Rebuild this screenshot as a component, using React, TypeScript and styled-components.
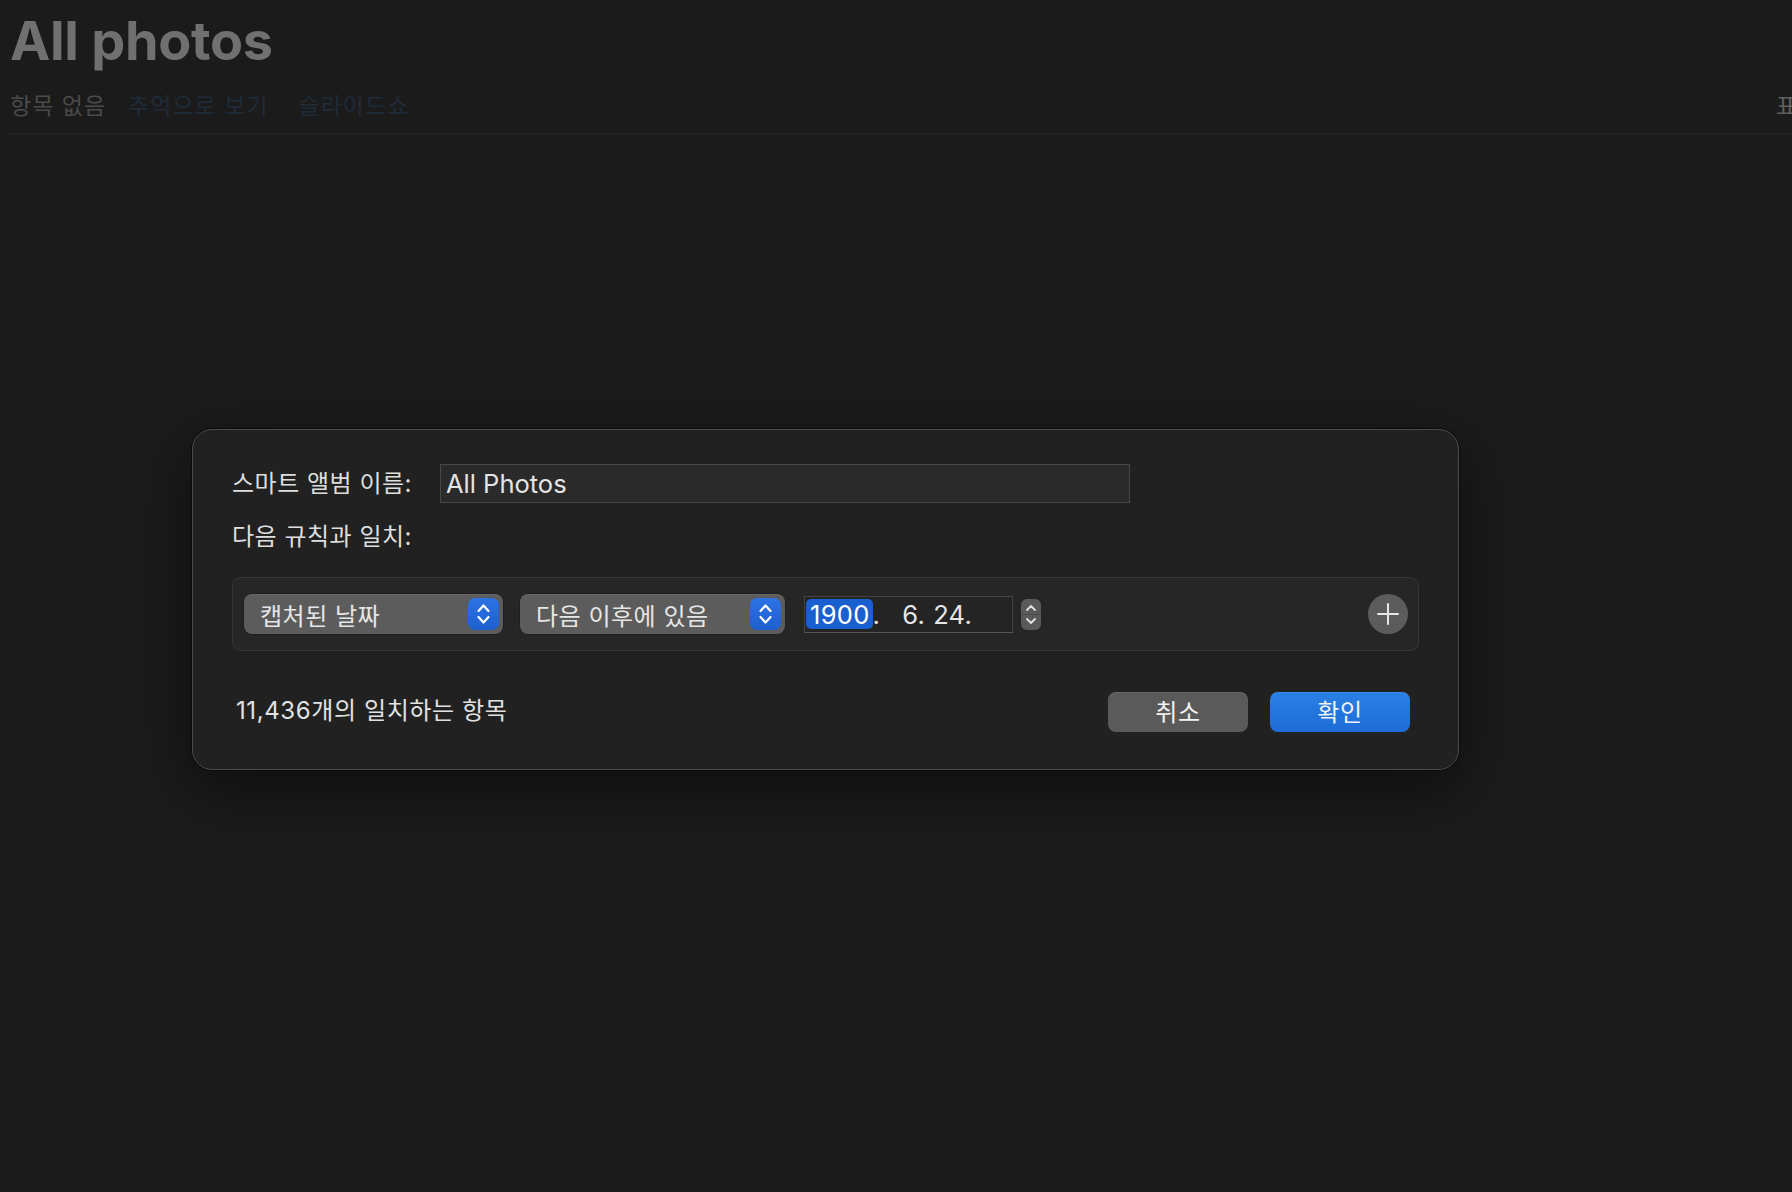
import React from "react";
import styled, { createGlobalStyle } from "styled-components";

const GlobalStyle = createGlobalStyle`
  html, body {
    margin: 0;
    padding: 0;
    background: #1b1b1b;
  }
  body {
    font-family: Inter, "Noto Sans CJK KR", "Noto Sans", sans-serif;
    -webkit-font-smoothing: antialiased;
  }
  * { box-sizing: border-box; }
`;

const Page = styled.div`
  width: 1792px;
  min-height: 1192px;
  overflow: hidden;
  background: #1b1b1b;
`;

const Header = styled.header`
  margin-left: 8px;
  padding-top: 14px;
  border-bottom: 1px solid #262626;
`;

const Title = styled.h1`
  margin: 0;
  padding-left: 2px;
  font-size: 54px;
  line-height: 54px;
  font-weight: 700;
  letter-spacing: -0.3px;
  color: #707070;
`;

const TabRow = styled.div`
  display: flex;
  align-items: center;
  margin-top: 23px;
  padding: 0 0 11px 2px;
  height: 42px;
  font-size: 23px;
  line-height: 31px;
  letter-spacing: 1px;
  white-space: nowrap;
`;

const Tab = styled.span<{ $tone: "muted" | "link"; $gap: number }>`
  margin-right: ${(p) => p.$gap}px;
  color: ${(p) => (p.$tone === "muted" ? "#4a4a4a" : "#1f2b38")};
`;

const ViewMenu = styled.span`
  margin-left: auto;
  width: 16px;
  overflow: hidden;
  color: #606060;
`;

const Sheet = styled.section`
  margin: 295px 0 0 192px;
  width: 1267px;
  padding: 34px 39px 37px 39px;
  background: #212121;
  border: 1px solid #4c4c4c;
  border-radius: 20px;
  box-shadow: 0 0 0 1px #0b0b0b, 0 18px 60px rgba(0, 0, 0, 0.5);
  color: #dedede;
  font-size: 24px;
  letter-spacing: 0.5px;
`;

const NameRow = styled.div`
  display: grid;
  grid-template-columns: 208px 690px;
  align-items: center;
  height: 39px;
`;

const Label = styled.span`
  line-height: 28px;
  white-space: nowrap;
  color: #dedede;
`;

const NameField = styled.div`
  height: 39px;
  display: flex;
  align-items: center;
  padding-left: 5px;
  background: #2a2a2a;
  border: 1px solid #474747;
  font-size: 25.5px;
  letter-spacing: 0;
  color: #e4e4e4;
`;

const RuleCaption = styled(Label)`
  display: block;
  margin-top: 20px;
`;

const RulesBox = styled.div`
  margin-top: 26px;
  height: 74px;
  display: flex;
  align-items: center;
  padding: 0 10px 0 11px;
  background: #262626;
  border: 1px solid #363636;
  border-radius: 9px;
`;

const Popup = styled.div<{ $w: number; $gap: number }>`
  width: ${(p) => p.$w}px;
  margin-right: ${(p) => p.$gap}px;
  height: 40px;
  display: flex;
  align-items: center;
  justify-content: space-between;
  padding: 0 4px 0 16px;
  background: #5c5c5c;
  border-radius: 8px;
  box-shadow: inset 0 1px 0 rgba(255, 255, 255, 0.08), 0 0 0 0.5px rgba(0, 0, 0, 0.4);
  color: #e6e6e6;
  white-space: nowrap;
`;

const BlueStepper = styled.span`
  width: 31px;
  height: 32px;
  border-radius: 7px;
  background: linear-gradient(#2d72e4, #1d5fcf);
  display: flex;
  align-items: center;
  justify-content: center;
`;

const DateField = styled.div`
  width: 209px;
  height: 37px;
  display: flex;
  align-items: center;
  padding-left: 1px;
  border: 1px solid #444;
  border-bottom-color: #555;
  background: #242424;
  font-size: 25.5px;
  letter-spacing: 0.3px;
  color: #e6e6e6;
  white-space: pre;
`;

const Segment = styled.span<{ $selected?: boolean; $gap?: number }>`
  display: inline-flex;
  align-items: center;
  height: 30px;
  margin-left: ${(p) => p.$gap ?? 0}px;
  padding: ${(p) => (p.$selected ? "0 3px 0 4px" : "0")};
  border-radius: 5px;
  background: ${(p) => (p.$selected ? "#1a5fd0" : "transparent")};
  color: ${(p) => (p.$selected ? "#ffffff" : "#e6e6e6")};
`;

const SmallStepper = styled.span`
  margin-left: 8px;
  width: 20px;
  height: 31px;
  border-radius: 6px;
  background: #5a5a5a;
  display: flex;
`;

const AddButton = styled.button`
  margin-left: auto;
  width: 40px;
  height: 40px;
  padding: 0;
  border: none;
  border-radius: 50%;
  background: #5c5c5c;
  display: flex;
  align-items: center;
  justify-content: center;
`;

const Footer = styled.div`
  margin-top: 41px;
  height: 40px;
  display: flex;
  align-items: center;
  padding: 0 9px 0 4px;
`;

const Count = styled.span`
  color: #e2e2e2;
  white-space: nowrap;
  line-height: 28px;
  margin-top: -3px;
  letter-spacing: 0.6px;
`;

const Actions = styled.div`
  margin-left: auto;
  display: flex;
  gap: 22px;
`;

const ActionButton = styled.button<{ $primary?: boolean }>`
  width: 140px;
  height: 40px;
  padding: 0 0 3px;
  border: none;
  border-radius: 8px;
  font-family: inherit;
  font-size: 24px;
  letter-spacing: 0.6px;
  color: #f2f2f2;
  background: ${(p) => (p.$primary ? "linear-gradient(#2a80e4, #1d6cd8)" : "#5a5a5a")};
  box-shadow: inset 0 1px 0 rgba(255, 255, 255, 0.08);
`;

const UpDown = () => (
  <svg width="31" height="32" viewBox="0 0 31 32" fill="none">
    <path d="M10.5 13L15.5 7.5L20.5 13" stroke="#fff" strokeWidth="2.2" strokeLinecap="round" strokeLinejoin="round" />
    <path d="M10.5 19L15.5 24.5L20.5 19" stroke="#fff" strokeWidth="2.2" strokeLinecap="round" strokeLinejoin="round" />
  </svg>
);

const SmallUpDown = () => (
  <svg width="20" height="31" viewBox="0 0 20 31" fill="none">
    <line x1="0" y1="15.5" x2="20" y2="15.5" stroke="#4a4a4a" strokeWidth="1" />
    <path d="M6 11L10 7L14 11" stroke="#e0e0e0" strokeWidth="1.8" strokeLinecap="round" strokeLinejoin="round" />
    <path d="M6 20L10 24L14 20" stroke="#e0e0e0" strokeWidth="1.8" strokeLinecap="round" strokeLinejoin="round" />
  </svg>
);

const Plus = () => (
  <svg width="22" height="22" viewBox="0 0 22 22" fill="none">
    <path d="M11 1V21M1 11H21" stroke="#e6e6e6" strokeWidth="2" strokeLinecap="round" />
  </svg>
);

export default function App() {
  return (
    <Page>
      <GlobalStyle />
      <Header>
        <Title>All photos</Title>
        <TabRow>
          <Tab $tone="muted" $gap={22}>항목 없음</Tab>
          <Tab $tone="link" $gap={30}>추억으로 보기</Tab>
          <Tab $tone="link" $gap={0}>슬라이드쇼</Tab>
          <ViewMenu>표시 방식</ViewMenu>
        </TabRow>
      </Header>

      <Sheet>
        <NameRow>
          <Label>스마트 앨범 이름:</Label>
          <NameField>All Photos</NameField>
        </NameRow>
        <RuleCaption>다음 규칙과 일치:</RuleCaption>
        <RulesBox>
          <Popup $w={259} $gap={17}>
            <span>캡처된 날짜</span>
            <BlueStepper>
              <UpDown />
            </BlueStepper>
          </Popup>
          <Popup $w={265} $gap={19}>
            <span>다음 이후에 있음</span>
            <BlueStepper>
              <UpDown />
            </BlueStepper>
          </Popup>
          <DateField>
            <Segment $selected>1900</Segment>
            <Segment>.</Segment>
            <Segment $gap={22}>6.</Segment>
            <Segment $gap={8}>24.</Segment>
          </DateField>
          <SmallStepper>
            <SmallUpDown />
          </SmallStepper>
          <AddButton aria-label="규칙 추가">
            <Plus />
          </AddButton>
        </RulesBox>
        <Footer>
          <Count>11,436개의 일치하는 항목</Count>
          <Actions>
            <ActionButton>취소</ActionButton>
            <ActionButton $primary>확인</ActionButton>
          </Actions>
        </Footer>
      </Sheet>
    </Page>
  );
}
